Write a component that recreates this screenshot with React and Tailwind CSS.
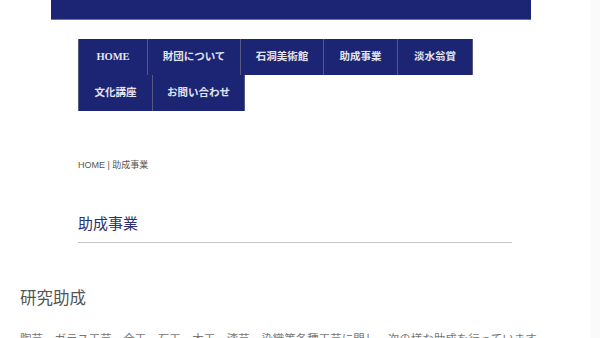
import React from "react";

const serif = { fontFamily: '"Liberation Serif", "Noto Sans CJK JP", serif' };

const row1 = [
  ["HOME", "w-[70px]"],
  ["財団について", "w-[93px]"],
  ["石洞美術館", "w-[83px]"],
  ["助成事業", "w-[74px]"],
  ["淡水翁賞", "w-[75px]"],
];
const row2 = [
  ["文化講座", "w-[75px]"],
  ["お問い合わせ", "w-[92px]"],
];

function NavRow({ items }) {
  return (
    <div className="flex">
      {items.map(([t, w], i) => (
        <div
          key={t}
          className={`${w} h-[36px] flex items-center justify-center bg-[#1b2573] border-r border-[#55597f] ${i === 0 ? "border-l" : ""} text-[10.5px] font-bold text-[#e4e4ee]`}
          style={serif}
        >
          {t}
        </div>
      ))}
    </div>
  );
}

export default function App() {
  return (
    <div className="w-[600px] h-[338px] overflow-hidden bg-white flex" style={{ fontFamily: '"Liberation Sans", "Noto Sans CJK JP", sans-serif' }}>
      <div className="w-[590px] shrink-0">
        <div className="ml-[51px] w-[480px] h-[20px] bg-[#1b2573] border-b border-[#6e73a0]" />
        <div className="ml-[78px] mt-[19px] flex flex-col">
          <NavRow items={row1} />
          <NavRow items={row2} />
        </div>
        <div className="ml-[78px] mt-[48px] text-[9px] text-[#555] leading-[12px]">HOME | 助成事業</div>
        <div className="ml-[78px] mt-[43px] w-[434px] border-b border-[#c4c4c4] pb-[8px]">
          <div className="text-[15px] leading-[20px] text-[#2b2f73]" style={serif}>助成事業</div>
        </div>
        <div className="ml-[20px] mt-[46px] text-[16.5px] leading-[20px] text-[#555]" style={serif}>研究助成</div>
        <div className="ml-[20px] mt-[22px] text-[11.5px] leading-[16px] text-[#777] whitespace-nowrap">
          陶芸、ガラス工芸、金工、石工、木工、漆芸、染織等各種工芸に関し、次の様な助成を行っています。
        </div>
      </div>
      <div className="w-[10px] h-full bg-[#fafafa]" />
    </div>
  );
}
